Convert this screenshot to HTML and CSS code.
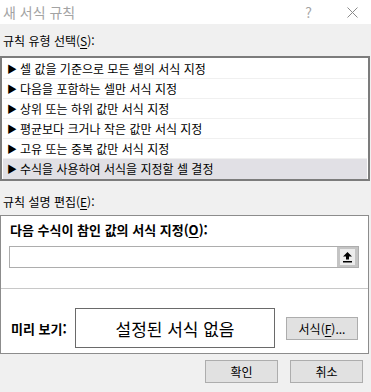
FILE: index.html
```html
<!DOCTYPE html>
<html lang="ko">
<head>
  <meta charset="UTF-8">
  <title>새 서식 규칙</title>
  <link rel="stylesheet" href="styles.css">
</head>
<body>
  <div class="titlebar">
    <span class="title">새 서식 규칙</span>
    <span class="help">?</span>
    <svg class="close" width="11" height="11" viewBox="0 0 11 11">
      <path d="M0.5 0.5 L10.5 10.5 M10.5 0.5 L0.5 10.5" stroke="#8a8a8a" stroke-width="1" fill="none"/>
    </svg>
  </div>

  <div class="dialog">
    <div class="section-label">규칙 유형 선택(<u>S</u>):</div>
    <ul class="rule-list">
      <li><span class="arrow">▶</span>셀 값을 기준으로 모든 셀의 서식 지정</li>
      <li><span class="arrow">▶</span>다음을 포함하는 셀만 서식 지정</li>
      <li><span class="arrow">▶</span>상위 또는 하위 값만 서식 지정</li>
      <li><span class="arrow">▶</span>평균보다 크거나 작은 값만 서식 지정</li>
      <li><span class="arrow">▶</span>고유 또는 중복 값만 서식 지정</li>
      <li class="selected"><span class="arrow">▶</span>수식을 사용하여 서식을 지정할 셀 결정</li>
    </ul>

    <div class="section-label second">규칙 설명 편집(<u>E</u>):</div>
    <div class="edit-box">
      <div class="edit-heading">다음 수식이 참인 값의 서식 지정(<u>O</u>):</div>
      <div class="formula">
        <div class="formula-field"></div>
        <div class="ref-btn">
          <svg width="11" height="12" viewBox="0 0 11 12">
            <path d="M5.5 1 L10 5.5 L7 5.5 L7 8.5 L4 8.5 L4 5.5 L1 5.5 Z" fill="#000"/>
            <rect x="1" y="10" width="9" height="1.5" fill="#000"/>
          </svg>
        </div>
      </div>
      <div class="divider"></div>
      <div class="preview-row">
        <span class="preview-label">미리 보기:</span>
        <div class="preview">설정된 서식 없음</div>
        <button class="btn format-btn">서식(<u>F</u>)...</button>
      </div>
    </div>

    <div class="actions">
      <button class="btn action-btn">확인</button>
      <button class="btn action-btn">취소</button>
    </div>
  </div>
</body>
</html>
```

FILE: styles.css
```css
* {
  box-sizing: border-box;
}

body {
  margin: 0;
  width: 371px;
  height: 392px;
  overflow: hidden;
  background-color: #f0f0f0;
  font-family: "Noto Sans CJK KR", "Noto Sans", sans-serif;
  font-size: 12px;
  color: #000;
}

u {
  text-decoration-thickness: 1px;
  text-underline-offset: 2px;
}

.titlebar {
  height: 24px;
  background-color: #fff;
  display: flex;
  align-items: center;
  padding-left: 3px;
}

.title {
  font-size: 14px;
  color: #a3a3a3;
  flex: 1;
}

.help {
  font-size: 14px;
  color: #a3a3a3;
  margin-right: 35px;
}

.close {
  margin-right: 13px;
}

.section-label {
  line-height: 16px;
  padding: 9px 0 0 3px;
  height: 32px;
}

.section-label.second {
  padding-top: 13px;
  height: 34px;
}

.rule-list {
  list-style: none;
  margin: 0;
  width: 370px;
  height: 125px;
  padding: 1px;
  border: 2px solid #7c7c7c;
  background-color: #fff;
}

.rule-list li {
  height: 20px;
  line-height: 19px;
  border-bottom: 1px solid #f0f0f0;
  padding-left: 4px;
  white-space: nowrap;
}

.rule-list li.selected {
  background-color: #e1e0e5;
  border-bottom: none;
}

.arrow {
  display: inline-block;
  font-size: 10px;
  width: 13px;
  vertical-align: 1px;
}

.edit-box {
  width: 369px;
  height: 139px;
  background-color: #fff;
  border: 1px solid #8c8c8c;
  padding: 6px 0 0 0;
}

.edit-heading {
  font-weight: bold;
  font-size: 13px;
  line-height: 16px;
  padding-left: 9px;
}

.formula {
  display: flex;
  margin: 8px 0 0 8px;
  width: 350px;
  height: 22px;
  border: 1px solid #adadad;
}

.formula-field {
  flex: 1;
}

.ref-btn {
  width: 21px;
  border: 3px solid #c4c4c4;
  border-top-width: 2px;
  border-bottom-width: 2px;
  display: flex;
  align-items: center;
  justify-content: center;
  background-color: #ececec;
}

.divider {
  margin-top: 20px;
  height: 1px;
  background-color: #c8c8c8;
}

.preview-row {
  display: flex;
  align-items: center;
  margin-top: 19px;
  padding-left: 10px;
}

.preview-label {
  font-weight: bold;
  font-size: 13px;
  width: 64px;
}

.preview {
  width: 200px;
  height: 40px;
  border: 1px solid #6a6a6a;
  font-size: 17px;
  display: flex;
  align-items: center;
  justify-content: center;
}

.btn {
  font-family: inherit;
  font-size: 12px;
  color: #000;
  background-color: #e1e1e1;
  border: 1px solid #adadad;
  padding: 0;
  height: 23px;
}

.format-btn {
  width: 72px;
  margin-left: 11px;
}

.actions {
  display: flex;
  justify-content: flex-end;
  gap: 12px;
  margin-top: 6px;
  padding-right: 8px;
}

.action-btn {
  width: 73px;
}
```
